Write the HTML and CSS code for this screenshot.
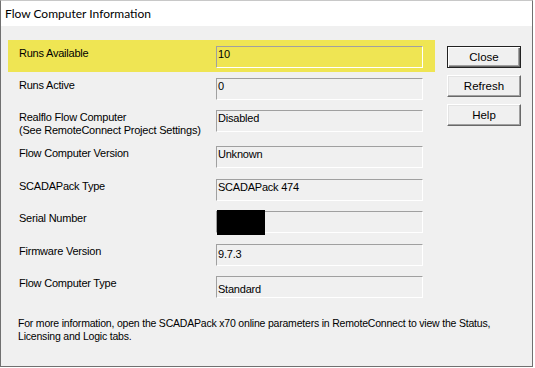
FILE: index.html
```html
<!DOCTYPE html>
<html>
<head>
<meta charset="utf-8">
<link rel="stylesheet" href="styles.css">
</head>
<body>
<div class="window">
  <div class="titlebar">Flow Computer Information</div>
  <div class="client">
    <div class="main">
      <div class="fields">
        <div class="row highlight">
          <div class="label">Runs Available</div>
          <div class="field">10</div>
        </div>
        <div class="row">
          <div class="label">Runs Active</div>
          <div class="field">0</div>
        </div>
        <div class="row row-tall">
          <div class="label">Realflo Flow Computer<br>(See RemoteConnect Project Settings)</div>
          <div class="field">Disabled</div>
        </div>
        <div class="row row-33">
          <div class="label">Flow Computer Version</div>
          <div class="field">Unknown</div>
        </div>
        <div class="row">
          <div class="label">SCADAPack Type</div>
          <div class="field">SCADAPack 474</div>
        </div>
        <div class="row row-33">
          <div class="label">Serial Number</div>
          <div class="field"><span class="redact"></span></div>
        </div>
        <div class="row">
          <div class="label">Firmware Version</div>
          <div class="field field-low">9.7.3</div>
        </div>
        <div class="row">
          <div class="label">Flow Computer Type</div>
          <div class="field field-lower">Standard</div>
        </div>
      </div>
      <div class="buttons">
        <button class="btn btn-default">Close</button>
        <button class="btn">Refresh</button>
        <button class="btn">Help</button>
      </div>
    </div>
    <p class="note">For more information, open the SCADAPack x70 online parameters in RemoteConnect to view the Status,<br>Licensing and Logic tabs.</p>
  </div>
</div>
</body>
</html>
```

FILE: styles.css
```css
html, body {
  margin: 0;
  padding: 0;
  background: #ffffff;
}

.window {
  width: 533px;
  height: 367px;
  box-sizing: border-box;
  border: 1px solid #707070;
  border-top-color: #c8c8c8;
  background: #f0f0f0;
  display: flex;
  flex-direction: column;
  font-family: "Liberation Sans", Arial, sans-serif;
  font-size: 11px;
  letter-spacing: -0.22px;
  color: #000;
}

.titlebar {
  height: 25px;
  background: #ffffff;
  font-family: Lato, "Noto Sans", sans-serif;
  font-size: 12px;
  letter-spacing: 0;
  line-height: 25px;
  padding-left: 4px;
  color: #000;
}

.client {
  flex: 1;
  padding-top: 14px;
  padding-left: 7px;
}

.main {
  display: flex;
  align-items: flex-start;
}

.fields {
  width: 427px;
  display: flex;
  flex-direction: column;
}

.row {
  display: flex;
  align-items: flex-start;
  height: 32px;
  box-sizing: border-box;
  padding-top: 6px;
  padding-left: 11px;
}

.row-tall { height: 36px; }
.row-33 { height: 33px; }

.highlight {
  background: #efe553;
}

.label {
  width: 197px;
  padding-top: 1px;
  line-height: 13px;
  white-space: nowrap;
}

.field {
  position: relative;
  width: 207px;
  height: 22px;
  box-sizing: border-box;
  border-style: solid;
  border-width: 1px;
  border-color: #a0a0a0 #ffffff #ffffff #a0a0a0;
  padding: 1px 0 0 1px;
  line-height: 13px;
}

.field-low { padding-top: 3px; }
.field-lower { padding-top: 6px; }

.redact {
  position: absolute;
  left: 0;
  top: -2px;
  width: 48px;
  height: 25px;
  background: #000;
}

.buttons {
  margin-left: 12px;
  padding-top: 6px;
  display: flex;
  flex-direction: column;
  gap: 7px;
}

.btn {
  width: 74px;
  height: 22px;
  box-sizing: border-box;
  margin: 0;
  padding: 0;
  background: #f0f0f0;
  font-family: "Liberation Sans", Arial, sans-serif;
  font-size: 11.5px;
  color: #000;
  border: 1px solid;
  border-color: #ffffff #696969 #696969 #ffffff;
  box-shadow: inset -1px -1px 0 #a0a0a0, inset 1px 1px 0 #e3e3e3;
}

.btn-default {
  border-color: #222;
  box-shadow: inset 1px 1px 0 #ffffff, inset -1px -1px 0 #696969, inset -2px -2px 0 #a0a0a0;
}

.note {
  margin: 15px 0 0 10px;
  font-size: 10.5px;
  line-height: 13px;
  white-space: nowrap;
  letter-spacing: -0.2px;
}
```
